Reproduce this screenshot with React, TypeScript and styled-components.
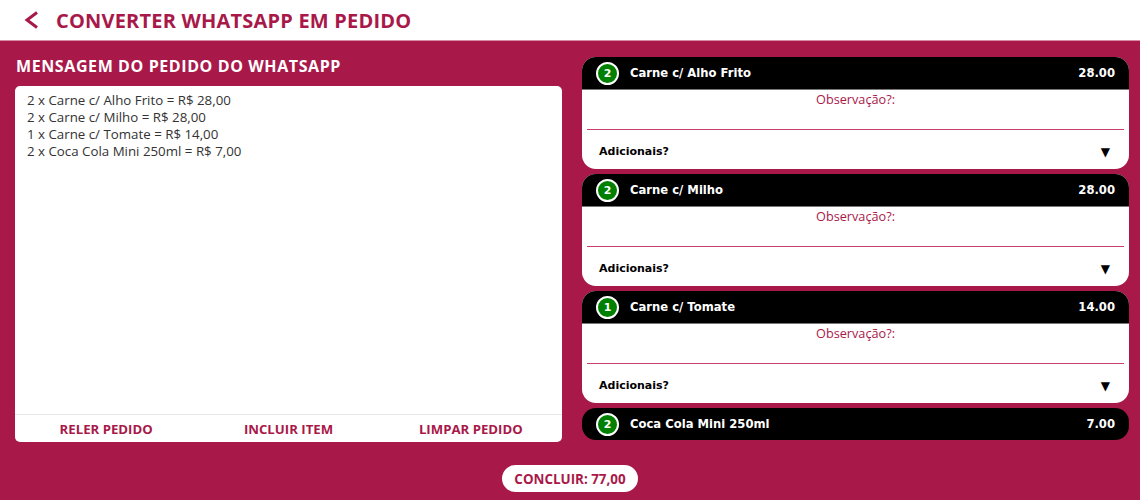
import React from "react";
import styled, { createGlobalStyle } from "styled-components";

const GlobalStyle = createGlobalStyle`
  html, body {
    margin: 0;
    padding: 0;
    background: #a8194a;
  }
  body {
    font-family: "Open Sans", "Noto Sans", sans-serif;
  }
`;

const crimson = "#a8194a";

const Page = styled.div`
  width: 1140px;
  height: 500px;
  display: flex;
  flex-direction: column;
  background: ${crimson};
  overflow: hidden;
`;

const TopBar = styled.header`
  height: 40px;
  background: #fff;
  display: flex;
  align-items: center;
  gap: 17px;
  padding-left: 23px;
  border-bottom: 1px solid #d98aa5;
`;

const BackButton = styled.button`
  border: 0;
  background: none;
  padding: 0;
  display: flex;
  cursor: pointer;
`;

const Title = styled.h1`
  margin: 0;
  font-size: 20px;
  font-weight: 700;
  color: ${crimson};
  letter-spacing: 0.2px;
`;

const Main = styled.div`
  display: grid;
  grid-template-columns: 547px 547px;
  column-gap: 20px;
  padding: 16px 11px 0 15px;
`;

const LeftColumn = styled.section`
  display: flex;
  flex-direction: column;
`;

const SectionTitle = styled.h2`
  margin: 0 0 10px 1px;
  height: 19px;
  font-size: 16px;
  font-weight: 700;
  color: #fff;
  line-height: 19px;
  letter-spacing: 0.6px;
`;

const MessageBox = styled.div`
  background: #fff;
  border-radius: 5px;
  height: 356px;
  display: flex;
  flex-direction: column;
`;

const MessageText = styled.div`
  flex: 1;
  padding: 6px 12px;
  font-size: 13.3px;
  line-height: 17px;
  color: #333;
`;

const ActionRow = styled.div`
  height: 27px;
  border-top: 1px solid #e8e8ec;
  display: grid;
  grid-template-columns: repeat(3, 1fr);
  align-items: center;
`;

const ActionButton = styled.button`
  border: 0;
  background: none;
  font-family: inherit;
  font-size: 13.2px;
  font-weight: 700;
  color: ${crimson};
  padding: 0;
  cursor: pointer;
`;

const RightColumn = styled.section`
  display: flex;
  flex-direction: column;
  gap: 5px;
`;

const ItemCard = styled.div`
  background: #fff;
  border-radius: 14px;
  overflow: hidden;
`;

const ItemHeader = styled.div<{ $open: boolean }>`
  height: ${(p) => (p.$open ? "33px" : "32px")};
  box-sizing: border-box;
  background: #000;
  display: flex;
  align-items: center;
  padding: 0 14px;
  color: #fff;
  font-family: "DejaVu Sans", Verdana, sans-serif;
  font-size: 11.6px;
  font-weight: 700;
  border-bottom: ${(p) => (p.$open ? "1px solid #777" : "0")};
`;

const QtyBadge = styled.span`
  width: 19px;
  height: 19px;
  border-radius: 50%;
  border: 2px solid #fff;
  background: #008000;
  display: flex;
  align-items: center;
  justify-content: center;
  font-size: 11px;
  margin-right: 11px;
`;

const ItemName = styled.span`
  flex: 1;
`;

const ItemBody = styled.div`
  padding: 0 5px;
`;

const ObsLabel = styled.div`
  text-align: center;
  font-size: 12.7px;
  color: ${crimson};
  line-height: 18px;
  padding-top: 0;
  height: 19px;
`;

const ObsInput = styled.div`
  height: 20px;
  border-bottom: 1px solid #c9406e;
`;

const Extras = styled.div`
  height: 35px;
  padding: 4px 14px 0 12px;
  display: flex;
  align-items: center;
  justify-content: space-between;
  font-size: 11px;
  font-weight: 700;
  color: #000;
  font-family: "DejaVu Sans", Verdana, sans-serif;
`;

const Caret = styled.span`
  font-size: 12px;
  font-family: "DejaVu Sans", sans-serif;
`;

const Footer = styled.div`
  display: flex;
  justify-content: center;
  padding-top: 23px;
`;

const FinishButton = styled.button`
  height: 27px;
  padding: 0 12px;
  border: 0;
  border-radius: 14px;
  background: #fff;
  font-family: inherit;
  font-size: 13.4px;
  font-weight: 700;
  color: ${crimson};
`;

type Item = { qty: number; name: string; price: string; open: boolean };

const items: Item[] = [
  { qty: 2, name: "Carne c/ Alho Frito", price: "28.00", open: true },
  { qty: 2, name: "Carne c/ Milho", price: "28.00", open: true },
  { qty: 1, name: "Carne c/ Tomate", price: "14.00", open: true },
  { qty: 2, name: "Coca Cola Mini 250ml", price: "7.00", open: false },
];

const lines = [
  "2 x Carne c/ Alho Frito = R$ 28,00",
  "2 x Carne c/ Milho = R$ 28,00",
  "1 x Carne c/ Tomate = R$ 14,00",
  "2 x Coca Cola Mini 250ml = R$ 7,00",
];

export default function App() {
  return (
    <Page>
      <GlobalStyle />
      <TopBar>
        <BackButton aria-label="voltar">
          <svg width="16" height="18" viewBox="0 0 16 18">
            <path d="M14 1.5 L4 9 L14 16.5" fill="none" stroke={crimson} strokeWidth="3" />
          </svg>
        </BackButton>
        <Title>CONVERTER WHATSAPP EM PEDIDO</Title>
      </TopBar>
      <Main>
        <LeftColumn>
          <SectionTitle>MENSAGEM DO PEDIDO DO WHATSAPP</SectionTitle>
          <MessageBox>
            <MessageText>
              {lines.map((l) => (
                <div key={l}>{l}</div>
              ))}
            </MessageText>
            <ActionRow>
              <ActionButton>RELER PEDIDO</ActionButton>
              <ActionButton>INCLUIR ITEM</ActionButton>
              <ActionButton>LIMPAR PEDIDO</ActionButton>
            </ActionRow>
          </MessageBox>
        </LeftColumn>
        <RightColumn>
          {items.map((it) => (
            <ItemCard key={it.name}>
              <ItemHeader $open={it.open}>
                <QtyBadge>{it.qty}</QtyBadge>
                <ItemName>{it.name}</ItemName>
                <span>{it.price}</span>
              </ItemHeader>
              {it.open && (
                <ItemBody>
                  <ObsLabel>Observação?:</ObsLabel>
                  <ObsInput />
                  <Extras>
                    <span>Adicionais?</span>
                    <Caret>▼</Caret>
                  </Extras>
                </ItemBody>
              )}
            </ItemCard>
          ))}
        </RightColumn>
      </Main>
      <Footer>
        <FinishButton>CONCLUIR: 77,00</FinishButton>
      </Footer>
    </Page>
  );
}
